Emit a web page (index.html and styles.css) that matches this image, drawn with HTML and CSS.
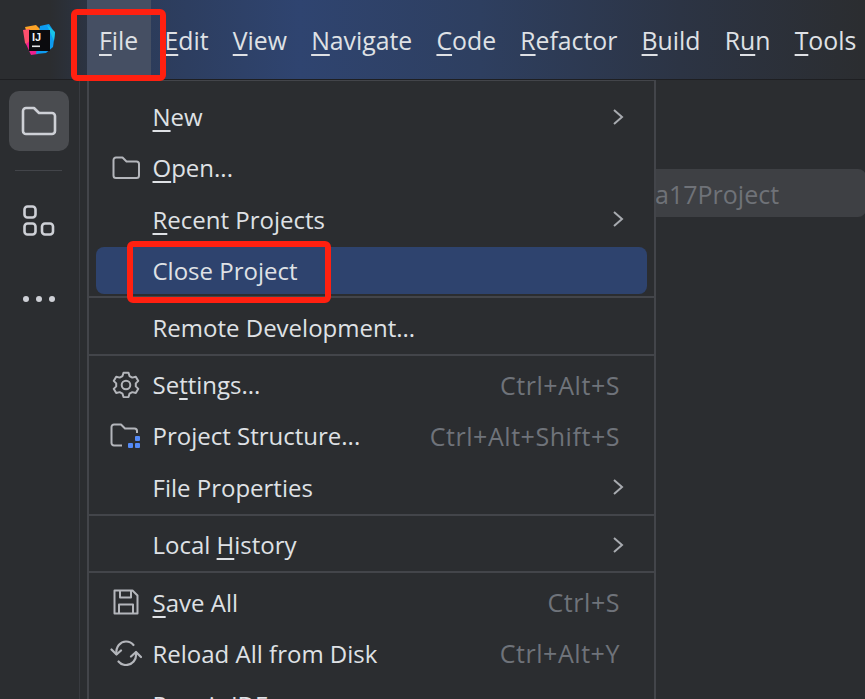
FILE: index.html
```html
<!DOCTYPE html>
<html lang="en">
<head>
<meta charset="utf-8">
<title>IDE File Menu</title>
<link rel="stylesheet" href="styles.css">
</head>
<body>
<div class="app">
  <header class="topbar">
    <div class="logo-cell">
      <svg class="logo" width="34" height="34" viewBox="0 0 34 34">
        <polygon points="3,4 14,2 20,8 6,14" fill="#fca326"/>
        <polygon points="1,7 8,6 9,26 3,20" fill="#fd4f6d"/>
        <polygon points="4,21 10,16 16,31 9,32" fill="#ee1f8d"/>
        <polygon points="18,3 27,1 33,10 31,24 24,30 14,31" fill="#0e9bf0"/>
        <polygon points="25,2 33,9 32,18" fill="#19c4e8"/>
        <rect x="7" y="7" width="21" height="21" fill="#0b0b0e"/>
        <text x="10" y="18" class="logo-text">IJ</text>
        <rect x="10" y="22.5" width="8" height="1.6" fill="#e8e8e8"/>
      </svg>
    </div>
    <nav class="menubar">
      <span class="menu-title active"><u>F</u>ile</span>
      <span class="menu-title"><u>E</u>dit</span>
      <span class="menu-title"><u>V</u>iew</span>
      <span class="menu-title"><u>N</u>avigate</span>
      <span class="menu-title"><u>C</u>ode</span>
      <span class="menu-title"><u>R</u>efactor</span>
      <span class="menu-title"><u>B</u>uild</span>
      <span class="menu-title">R<u>u</u>n</span>
      <span class="menu-title"><u>T</u>ools</span>
    </nav>
  </header>
  <div class="workspace">
    <aside class="rail">
      <div class="rail-btn selected">
        <svg width="36" height="30" viewBox="0 0 36 30" fill="none" stroke="#ced0d6" stroke-width="2.6" stroke-linejoin="round">
          <path d="M2 5a3 3 0 0 1 3-3h8l5 5h13a3 3 0 0 1 3 3v15a3 3 0 0 1-3 3H5a3 3 0 0 1-3-3z"/>
        </svg>
      </div>
      <div class="rail-sep"></div>
      <div class="rail-btn">
        <svg width="32" height="32" viewBox="0 0 32 32" fill="none" stroke="#ced0d6" stroke-width="2.6">
          <rect x="1.500" y="1.500" width="11" height="11" rx="3"/>
          <rect x="1.500" y="18.500" width="11" height="11" rx="3"/>
          <rect x="19" y="18.500" width="11" height="11" rx="3"/>
        </svg>
      </div>
      <div class="rail-more"><i></i><i></i><i></i></div>
    </aside>
    <main class="main">
      <div class="project-row">Java17Project</div>
    </main>
  </div>

  <div class="menu">
    <div class="item"><span class="ico"></span><span class="label"><u>N</u>ew</span><svg class="chev" width="12" height="18" viewBox="0 0 12 18"><path d="M2 2l8 7-8 7"/></svg></div>
    <div class="item"><span class="ico"><svg width="28" height="24" viewBox="0 0 28 24" fill="none" stroke="#b4b6bb" stroke-width="2" stroke-linejoin="round"><path d="M1.500 4a2.500 2.500 0 0 1 2.500-2.500h6.500l4 4h10a2.500 2.500 0 0 1 2.500 2.500v11.500a2.500 2.500 0 0 1-2.500 2.500H4a2.500 2.500 0 0 1-2.500-2.500z"/></svg></span><span class="label"><u>O</u>pen...</span></div>
    <div class="item"><span class="ico"></span><span class="label"><u>R</u>ecent Projects</span><svg class="chev" width="12" height="18" viewBox="0 0 12 18"><path d="M2 2l8 7-8 7"/></svg></div>
    <div class="item hl"><span class="ico"></span><span class="label">Close Project</span></div>
    <div class="sep"></div>
    <div class="item"><span class="ico"></span><span class="label">Remote Development...</span></div>
    <div class="sep"></div>
    <div class="item"><span class="ico"><svg width="28" height="28" viewBox="0 0 28 28" fill="none" stroke="#b4b6bb" stroke-width="2" stroke-linejoin="round"><path d="M11.500 1.500h5l1 3.500 2.800 1.600 3.500-.9 2.500 4.300-2.500 2.500v3.200l2.500 2.500-2.500 4.300-3.500-.9-2.800 1.600-1 3.500h-5l-1-3.500-2.800-1.600-3.500.9-2.500-4.300 2.500-2.500V12.500L1.700 10l2.500-4.300 3.500.9 2.800-1.600z" transform="translate(0 .2) scale(1 .97)"/><circle cx="14" cy="14" r="4.300"/></svg></span><span class="label">Se<u>t</u>tings...</span><span class="short">Ctrl+Alt+S</span></div>
    <div class="item"><span class="ico"><svg width="32" height="28" viewBox="0 0 32 28" fill="none"><path d="M12 23.500H4a2.500 2.500 0 0 1-2.500-2.500V5A2.500 2.500 0 0 1 4 2.500h7l4 4h9.500a2.500 2.500 0 0 1 2.500 2.500v2" stroke="#b4b6bb" stroke-width="2" stroke-linejoin="round"/><rect x="25" y="14" width="5" height="5" rx="1" fill="#548af7"/><rect x="18" y="21" width="5" height="5" rx="1" fill="#548af7"/><rect x="25" y="21" width="5" height="5" rx="1" fill="#548af7"/></svg></span><span class="label">Project Structure...</span><span class="short">Ctrl+Alt+Shift+S</span></div>
    <div class="item"><span class="ico"></span><span class="label">File Properties</span><svg class="chev" width="12" height="18" viewBox="0 0 12 18"><path d="M2 2l8 7-8 7"/></svg></div>
    <div class="sep"></div>
    <div class="item"><span class="ico"></span><span class="label">Local <u>H</u>istory</span><svg class="chev" width="12" height="18" viewBox="0 0 12 18"><path d="M2 2l8 7-8 7"/></svg></div>
    <div class="sep"></div>
    <div class="item"><span class="ico"><svg width="26" height="26" viewBox="0 0 26 26" fill="none" stroke="#b4b6bb" stroke-width="2" stroke-linejoin="round"><path d="M1.500 1.500h18l5 5v18h-23z"/><path d="M7 1.500v7h11v-7M6 24.500v-9h14v9"/></svg></span><span class="label"><u>S</u>ave All</span><span class="short">Ctrl+S</span></div>
    <div class="item"><span class="ico"><svg width="32" height="26" viewBox="0 0 32 26" fill="none" stroke="#b4b6bb" stroke-width="2.200" stroke-linecap="round" stroke-linejoin="round"><path d="M6.500 14C5.500 6.500 10.500 1.500 16 1.500c3 0 5.500 1 7.500 3.500"/><path d="M1.500 9.500L6.500 14.500 11 10.500"/><path d="M26 12.500c1 7.500-4 12.500-10 12.500-3 0-5.500-1-7.500-3.500"/><path d="M21 16.500l5-4.500 5 5"/></svg></span><span class="label">Reload All from Disk</span><span class="short">Ctrl+Alt+Y</span></div>
    <div class="item"><span class="ico"></span><span class="label">Repair IDE...</span></div>
  </div>

  <div class="mark mark-file"></div>
  <div class="mark mark-close"></div>
</div>
</body>
</html>
```
FILE: styles.css
```css
* { box-sizing: border-box; }
html, body { margin: 0; height: 100%; }
body { background: #2b2d30; overflow: hidden; font-family: "Open Sans", "Noto Sans", sans-serif; color: #dfe1e5; }
u { text-underline-offset: 4px; text-decoration-thickness: 2px; }
.app { position: relative; width: 865px; height: 699px; overflow: hidden; display: flex; flex-direction: column; }

.topbar {
  height: 80px; flex: none; display: flex; align-items: center;
  border-bottom: 1px solid #1e1f22;
  background: linear-gradient(90deg, #2b2d30 0, #2b2d30 50px, #2c3b58 130px, #2f4470 300px, #2e3f60 480px, #2c3444 680px, #2b2d30 865px);
}
.logo-cell { width: 87px; flex: none; display: flex; padding-left: 22px; }
.menubar { display: flex; align-self: stretch; font-size: 24.800px; }
.menu-title { display: flex; align-items: center; padding: 0 12.100px; white-space: pre; }
.menu-title.active { background: #454f63; padding: 0 12.500px 0 12px; width: 64px; margin-right: 1.400px; }
.logo-text { font: 700 11px "Liberation Sans", sans-serif; fill: #f0f0f0; }

.workspace { flex: 1; display: flex; min-height: 0; }
.rail { width: 80px; flex: none; border-right: 1px solid #393b40; display: flex; flex-direction: column; align-items: center; padding: 11px 0 0 0; }
.rail-btn { width: 60px; height: 60px; border-radius: 10px; display: flex; align-items: center; justify-content: center; margin-left: -1px; }
.rail-btn.selected { background: #4a4c50; }
.rail-sep { width: 47px; height: 1px; background: #43454a; margin: 19px 0 20px -2px; }
.rail-more { display: flex; gap: 7px; margin: 45px 0 0 -2px; }
.rail-more i { width: 6px; height: 6px; border-radius: 50%; background: #ced0d6; }

.main { flex: 1; padding-top: 89px; }
.project-row { height: 48px; margin-left: 480px; padding: 2px 0 0 62px; line-height: 46px; font-size: 25px; color: #6f7278; background: #3e4044; border-radius: 8px; width: 306px; white-space: nowrap; }

.menu {
  position: absolute; left: 87px; top: 80px; width: 569px;
  background: #2b2d30; border: 1px solid #43454a; border-width: 1px 2px 0 2px;
  padding-top: 10px; font-size: 24px;
}
.item { height: 51.300px; display: flex; align-items: center; margin: 0 7px; padding: 0 22px 0 0; border-radius: 8px; }
.item .ico { width: 56.500px; flex: none; display: flex; justify-content: center; padding-left: 4px; }
.label { flex: 1; white-space: nowrap; }
.short { color: #6f737a; white-space: nowrap; font-size: 25px; letter-spacing: .55px; margin-right: 5px; }
.chev { fill: none; stroke: #a8abb0; stroke-width: 2; margin-right: 1px; }
.hl { background: #2e436e; height: 47px; margin-top: 2px; margin-bottom: 2.300px; }
.sep { height: 2px; background: #43454a; margin: 1px 0 3.200px; }

.mark { position: absolute; border: 6px solid #ff2010; border-radius: 6px; }
.mark-file { left: 71px; top: 9px; width: 95px; height: 72px; }
.mark-close { left: 127px; top: 241px; width: 204px; height: 62px; }
```
